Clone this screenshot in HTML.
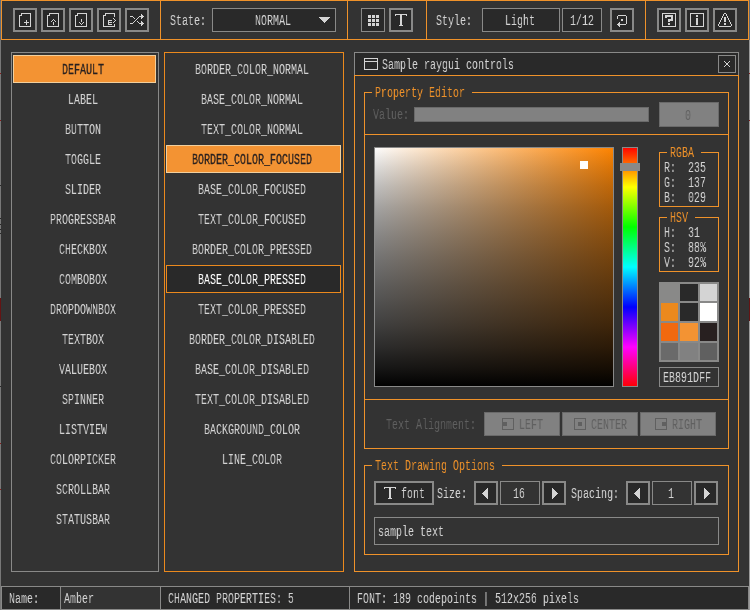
<!DOCTYPE html>
<html><head><meta charset="utf-8"><title>rGuiStyler</title>
<style>
html,body{margin:0;padding:0}
body{width:750px;height:610px;background:#333333;position:relative;overflow:hidden}
#app{position:absolute;left:0;top:0;width:750px;height:610px;overflow:hidden;background:#333333}
#app div,#app svg,#app span{position:absolute;display:block}
.tp{-webkit-text-stroke:0.3px}
.t{font:15.18px/16px "Liberation Mono",monospace;white-space:pre;transform:scaleX(0.6587);transform-origin:0 0;letter-spacing:0;will-change:transform}
</style></head><body><div id="app">
<div style="left:0px;top:0px;width:1px;height:40px;background:#5f6a78"></div>
<div style="left:0px;top:40px;width:1px;height:570px;background:#787878"></div>
<div style="left:0px;top:185px;width:1px;height:1px;background:#2a2a2a"></div>
<div style="left:0px;top:218px;width:1px;height:1px;background:#2a2a2a"></div>
<div style="left:0px;top:224px;width:1px;height:1px;background:#2a2a2a"></div>
<div style="left:0px;top:229px;width:1px;height:1px;background:#2a2a2a"></div>
<div style="left:0px;top:233px;width:1px;height:1px;background:#2a2a2a"></div>
<div style="left:0px;top:386px;width:1px;height:1px;background:#2a2a2a"></div>
<div style="left:0px;top:443px;width:1px;height:1px;background:#8b1a1a"></div>
<div style="left:0px;top:489px;width:1px;height:1px;background:#8b1a1a"></div>
<div style="left:0px;top:73px;width:1px;height:1px;background:#8b1a1a"></div>
<div style="left:0px;top:120px;width:1px;height:1px;background:#8b1a1a"></div>
<div style="left:749px;top:0px;width:1px;height:40px;background:#5f6a78"></div>
<div style="left:749px;top:40px;width:1px;height:570px;background:#9a9a9a"></div>
<div style="left:749px;top:73px;width:1px;height:1px;background:#8b1a1a"></div>
<div style="left:749px;top:120px;width:1px;height:1px;background:#8b1a1a"></div>
<div style="left:0px;top:298px;width:1px;height:23px;background:#641414"></div>
<div style="left:749px;top:298px;width:1px;height:23px;background:#641414"></div>
<div style="left:1px;top:0px;width:160px;height:40px;background:#333333;box-shadow:inset 0 0 0 1px #ef922a;"></div>
<div style="left:160px;top:0px;width:188px;height:40px;background:#333333;box-shadow:inset 0 0 0 1px #ef922a;"></div>
<div style="left:347px;top:0px;width:80px;height:40px;background:#333333;box-shadow:inset 0 0 0 1px #ef922a;"></div>
<div style="left:426px;top:0px;width:220px;height:40px;background:#333333;box-shadow:inset 0 0 0 1px #ef922a;"></div>
<div style="left:645px;top:0px;width:104px;height:40px;background:#333333;box-shadow:inset 0 0 0 1px #ef922a;"></div>
<div style="left:13px;top:8px;width:24px;height:24px;background:#292929;box-shadow:inset 0 0 0 2px #898988;"></div>
<div style="left:41px;top:8px;width:24px;height:24px;background:#292929;box-shadow:inset 0 0 0 2px #898988;"></div>
<div style="left:69px;top:8px;width:24px;height:24px;background:#292929;box-shadow:inset 0 0 0 2px #898988;"></div>
<div style="left:97px;top:8px;width:24px;height:24px;background:#292929;box-shadow:inset 0 0 0 2px #898988;"></div>
<div style="left:125px;top:8px;width:24px;height:24px;background:#292929;box-shadow:inset 0 0 0 2px #898988;"></div>
<span class="t" style="left:170.4px;top:13px;color:#d4d4d4">State:</span>
<div style="left:212px;top:8px;width:124px;height:24px;background:#292929;box-shadow:inset 0 0 0 1px #898988;"></div>
<span class="t" style="left:255.4px;top:13px;color:#d4d4d4">NORMAL</span>
<svg style="left:319px;top:17px" width="11" height="6" viewBox="0 0 11 6" shape-rendering="crispEdges"><path d="M0,0h11v1h-11zM1,1h9v1h-9zM2,2h7v1h-7zM3,3h5v1h-5zM4,4h3v1h-3zM5,5h1v1h-1z" fill="#d4d4d4"/></svg>
<div style="left:361px;top:8px;width:24px;height:24px;background:#292929;box-shadow:inset 0 0 0 1px #898988;"></div>
<div style="left:389px;top:8px;width:24px;height:24px;background:#292929;box-shadow:inset 0 0 0 2px #898988;"></div>
<span class="t" style="left:436.4px;top:13px;color:#d4d4d4">Style:</span>
<div style="left:482px;top:8px;width:78px;height:24px;background:#292929;box-shadow:inset 0 0 0 1px #898988;"></div>
<span class="t" style="left:505.4px;top:13px;color:#d4d4d4">Light</span>
<div style="left:562px;top:8px;width:40px;height:24px;background:#292929;box-shadow:inset 0 0 0 1px #898988;"></div>
<span class="t" style="left:570.4px;top:13px;color:#d4d4d4">1/12</span>
<div style="left:610px;top:8px;width:24px;height:24px;background:#292929;box-shadow:inset 0 0 0 2px #898988;"></div>
<div style="left:657px;top:8px;width:24px;height:24px;background:#292929;box-shadow:inset 0 0 0 2px #898988;"></div>
<div style="left:685px;top:8px;width:24px;height:24px;background:#292929;box-shadow:inset 0 0 0 2px #898988;"></div>
<div style="left:713px;top:8px;width:24px;height:24px;background:#292929;box-shadow:inset 0 0 0 2px #898988;"></div>
<div style="left:11px;top:52px;width:148px;height:520px;background:#333333;box-shadow:inset 0 0 0 1px #898988;"></div>
<div style="left:13px;top:55px;width:143px;height:28px;background:#f39333;box-shadow:inset 0 0 0 1px #f1cf9d;"></div>
<span class="t tp" style="left:62.4px;top:62px;color:#282020">DEFAULT</span>
<span class="t" style="left:68.4px;top:92px;color:#d4d4d4">LABEL</span>
<span class="t" style="left:65.4px;top:122px;color:#d4d4d4">BUTTON</span>
<span class="t" style="left:65.4px;top:152px;color:#d4d4d4">TOGGLE</span>
<span class="t" style="left:65.4px;top:182px;color:#d4d4d4">SLIDER</span>
<span class="t" style="left:50.4px;top:212px;color:#d4d4d4">PROGRESSBAR</span>
<span class="t" style="left:59.4px;top:242px;color:#d4d4d4">CHECKBOX</span>
<span class="t" style="left:59.4px;top:272px;color:#d4d4d4">COMBOBOX</span>
<span class="t" style="left:50.4px;top:302px;color:#d4d4d4">DROPDOWNBOX</span>
<span class="t" style="left:62.4px;top:332px;color:#d4d4d4">TEXTBOX</span>
<span class="t" style="left:59.4px;top:362px;color:#d4d4d4">VALUEBOX</span>
<span class="t" style="left:62.4px;top:392px;color:#d4d4d4">SPINNER</span>
<span class="t" style="left:59.4px;top:422px;color:#d4d4d4">LISTVIEW</span>
<span class="t" style="left:50.4px;top:452px;color:#d4d4d4">COLORPICKER</span>
<span class="t" style="left:56.4px;top:482px;color:#d4d4d4">SCROLLBAR</span>
<span class="t" style="left:56.4px;top:512px;color:#d4d4d4">STATUSBAR</span>
<div style="left:164px;top:52px;width:180px;height:520px;background:#333333;box-shadow:inset 0 0 0 1px #eb891d;"></div>
<span class="t" style="left:195.4px;top:62px;color:#d4d4d4">BORDER_COLOR_NORMAL</span>
<span class="t" style="left:201.4px;top:92px;color:#d4d4d4">BASE_COLOR_NORMAL</span>
<span class="t" style="left:201.4px;top:122px;color:#d4d4d4">TEXT_COLOR_NORMAL</span>
<div style="left:166px;top:145px;width:175px;height:28px;background:#f39333;box-shadow:inset 0 0 0 1px #f1cf9d;"></div>
<span class="t tp" style="left:192.4px;top:152px;color:#282020">BORDER_COLOR_FOCUSED</span>
<span class="t" style="left:198.4px;top:182px;color:#d4d4d4">BASE_COLOR_FOCUSED</span>
<span class="t" style="left:198.4px;top:212px;color:#d4d4d4">TEXT_COLOR_FOCUSED</span>
<span class="t" style="left:192.4px;top:242px;color:#d4d4d4">BORDER_COLOR_PRESSED</span>
<div style="left:166px;top:265px;width:175px;height:28px;background:#292929;box-shadow:inset 0 0 0 1px #eb891d;"></div>
<span class="t" style="left:198.4px;top:272px;color:#ffffff">BASE_COLOR_PRESSED</span>
<span class="t" style="left:198.4px;top:302px;color:#d4d4d4">TEXT_COLOR_PRESSED</span>
<span class="t" style="left:189.4px;top:332px;color:#d4d4d4">BORDER_COLOR_DISABLED</span>
<span class="t" style="left:195.4px;top:362px;color:#d4d4d4">BASE_COLOR_DISABLED</span>
<span class="t" style="left:195.4px;top:392px;color:#d4d4d4">TEXT_COLOR_DISABLED</span>
<span class="t" style="left:204.4px;top:422px;color:#d4d4d4">BACKGROUND_COLOR</span>
<span class="t" style="left:222.4px;top:452px;color:#d4d4d4">LINE_COLOR</span>
<div style="left:354px;top:52px;width:385px;height:24px;background:#292929;box-shadow:inset 0 0 0 1px #898988;"></div>
<div style="left:354px;top:75px;width:385px;height:497px;background:#333333;box-shadow:inset 0 0 0 1px #ef922a;"></div>
<div style="left:718px;top:55px;width:18px;height:18px;background:#292929;box-shadow:inset 0 0 0 1px #898988;"></div>
<svg style="left:724px;top:61px" width="6" height="6" viewBox="0 0 6 6" shape-rendering="crispEdges"><path d="M0,0h1v1h-1zM5,0h1v1h-1zM1,1h1v1h-1zM4,1h1v1h-1zM2,2h2v2h-2zM1,4h1v1h-1zM4,4h1v1h-1zM0,5h1v1h-1zM5,5h1v1h-1z" fill="#d4d4d4"/></svg>
<svg style="left:364px;top:58px" width="14" height="12" viewBox="0 0 14 12" shape-rendering="crispEdges"><path d="M0.5,0.5 H13.5 V11.5 H0.5 Z M0.5,3.5 H13.5" fill="none" stroke="#d4d4d4"/></svg>
<span class="t" style="left:382.4px;top:57px;color:#d4d4d4">Sample raygui controls</span>
<div style="left:364px;top:92px;width:1px;height:357px;background:#ef922a"></div>
<div style="left:364px;top:448px;width:365px;height:1px;background:#ef922a"></div>
<div style="left:728px;top:92px;width:1px;height:357px;background:#ef922a"></div>
<div style="left:364px;top:92px;width:8px;height:1px;background:#ef922a"></div>
<div style="left:472px;top:92px;width:257px;height:1px;background:#ef922a"></div>
<span class="t" style="left:375.4px;top:85px;color:#ef922a">Property Editor</span>
<div style="left:364px;top:134px;width:365px;height:1px;background:#ef922a"></div>
<div style="left:364px;top:399px;width:365px;height:1px;background:#ef922a"></div>
<span class="t" style="left:373.4px;top:107px;color:#606060">Value:</span>
<div style="left:414px;top:107px;width:235px;height:15px;background:#818181;box-shadow:inset 0 0 0 1px #6a6a6a;"></div>
<div style="left:659px;top:102px;width:60px;height:25px;background:#818181;box-shadow:inset 0 0 0 1px #6a6a6a;"></div>
<span class="t" style="left:685.4px;top:108px;color:#606060">0</span>
<div style="left:374px;top:147px;width:240px;height:240px;background:linear-gradient(to bottom,rgba(0,0,0,0.0000) 0.00%,rgba(25,25,25,0.0799) 4.17%,rgba(25,25,25,0.1534) 8.33%,rgba(25,25,25,0.2207) 12.50%,rgba(25,25,25,0.2824) 16.67%,rgba(25,25,25,0.3389) 20.83%,rgba(24,24,24,0.3906) 25.00%,rgba(24,24,24,0.4380) 29.17%,rgba(24,24,24,0.4815) 33.33%,rgba(23,23,23,0.5215) 37.50%,rgba(22,22,22,0.5584) 41.67%,rgba(21,21,21,0.5928) 45.83%,rgba(20,20,20,0.6250) 50.00%,rgba(19,19,19,0.6555) 54.17%,rgba(18,18,18,0.6846) 58.33%,rgba(17,17,17,0.7129) 62.50%,rgba(15,15,15,0.7407) 66.67%,rgba(14,14,14,0.7686) 70.83%,rgba(12,12,12,0.7969) 75.00%,rgba(10,10,10,0.8260) 79.17%,rgba(8,8,8,0.8565) 83.33%,rgba(6,6,6,0.8887) 87.50%,rgba(4,4,4,0.9230) 91.67%,rgba(2,2,2,0.9600) 95.83%,rgba(0,0,0,1.0000) 100.00%),linear-gradient(to right,#fff,#ff8400);box-shadow:inset 0 0 0 1px #898988"></div>
<div style="left:580px;top:161px;width:8px;height:8px;background:#ffffff"></div>
<div style="left:622px;top:147px;width:16px;height:240px;background:linear-gradient(to bottom,#f00 0%,#ff0 16.667%,#0f0 33.333%,#0ff 50%,#00f 66.667%,#f0f 83.333%,#f00 100%);box-shadow:inset 0 0 0 1px #898988"></div>
<div style="left:620px;top:163px;width:20px;height:8px;background:#898988"></div>
<div style="left:659px;top:152px;width:1px;height:55px;background:#ef922a"></div>
<div style="left:659px;top:206px;width:60px;height:1px;background:#ef922a"></div>
<div style="left:718px;top:152px;width:1px;height:55px;background:#ef922a"></div>
<div style="left:659px;top:152px;width:8px;height:1px;background:#ef922a"></div>
<div style="left:701px;top:152px;width:18px;height:1px;background:#ef922a"></div>
<span class="t" style="left:670.4px;top:145px;color:#ef922a">RGBA</span>
<span class="t" style="left:664.4px;top:160px;color:#d4d4d4">R:</span>
<span class="t" style="left:688.4px;top:160px;color:#d4d4d4">235</span>
<span class="t" style="left:664.4px;top:175px;color:#d4d4d4">G:</span>
<span class="t" style="left:688.4px;top:175px;color:#d4d4d4">137</span>
<span class="t" style="left:664.4px;top:190px;color:#d4d4d4">B:</span>
<span class="t" style="left:688.4px;top:190px;color:#d4d4d4">029</span>
<div style="left:659px;top:217px;width:1px;height:55px;background:#ef922a"></div>
<div style="left:659px;top:271px;width:60px;height:1px;background:#ef922a"></div>
<div style="left:718px;top:217px;width:1px;height:55px;background:#ef922a"></div>
<div style="left:659px;top:217px;width:8px;height:1px;background:#ef922a"></div>
<div style="left:695px;top:217px;width:24px;height:1px;background:#ef922a"></div>
<span class="t" style="left:670.4px;top:210px;color:#ef922a">HSV</span>
<span class="t" style="left:664.4px;top:225px;color:#d4d4d4">H:</span>
<span class="t" style="left:688.4px;top:225px;color:#d4d4d4">31</span>
<span class="t" style="left:664.4px;top:240px;color:#d4d4d4">S:</span>
<span class="t" style="left:688.4px;top:240px;color:#d4d4d4">88%</span>
<span class="t" style="left:664.4px;top:255px;color:#d4d4d4">V:</span>
<span class="t" style="left:688.4px;top:255px;color:#d4d4d4">92%</span>
<div style="left:659px;top:282px;width:60px;height:80px;background:#898988"></div>
<div style="left:661px;top:284px;width:17px;height:17px;background:#898988"></div>
<div style="left:680px;top:284px;width:18px;height:17px;background:#292929"></div>
<div style="left:700px;top:284px;width:17px;height:17px;background:#d4d4d4"></div>
<div style="left:661px;top:303px;width:17px;height:18px;background:#eb891d"></div>
<div style="left:680px;top:303px;width:18px;height:18px;background:#292929"></div>
<div style="left:700px;top:303px;width:17px;height:18px;background:#ffffff"></div>
<div style="left:661px;top:323px;width:17px;height:18px;background:#f1690f"></div>
<div style="left:680px;top:323px;width:18px;height:18px;background:#f39333"></div>
<div style="left:700px;top:323px;width:17px;height:18px;background:#282020"></div>
<div style="left:661px;top:343px;width:17px;height:17px;background:#6a6a6a"></div>
<div style="left:680px;top:343px;width:18px;height:17px;background:#818181"></div>
<div style="left:700px;top:343px;width:17px;height:17px;background:#606060"></div>
<div style="left:659px;top:367px;width:60px;height:20px;background:#333333;box-shadow:inset 0 0 0 1px #898988;"></div>
<span class="t" style="left:663.4px;top:370px;color:#d4d4d4">EB891DFF</span>
<span class="t" style="left:386.4px;top:417px;color:#606060">Text Alignment:</span>
<div style="left:484px;top:412px;width:76px;height:24px;background:#818181;box-shadow:inset 0 0 0 1px #6a6a6a;"></div>
<svg style="left:500px;top:416px" width="16" height="16" viewBox="0 0 16 16" shape-rendering="crispEdges"><path d="M2.5,2.5 H13.5 V13.5 H2.5 Z" fill="none" stroke="#606060"/><rect x="3" y="6" width="4" height="4" fill="#606060"/></svg>
<span class="t" style="left:519.4px;top:417px;color:#606060">LEFT</span>
<div style="left:562px;top:412px;width:76px;height:24px;background:#818181;box-shadow:inset 0 0 0 1px #6a6a6a;"></div>
<svg style="left:572px;top:416px" width="16" height="16" viewBox="0 0 16 16" shape-rendering="crispEdges"><path d="M2.5,2.5 H13.5 V13.5 H2.5 Z" fill="none" stroke="#606060"/><rect x="6" y="6" width="4" height="4" fill="#606060"/></svg>
<span class="t" style="left:591.4px;top:417px;color:#606060">CENTER</span>
<div style="left:640px;top:412px;width:76px;height:24px;background:#818181;box-shadow:inset 0 0 0 1px #6a6a6a;"></div>
<svg style="left:653px;top:416px" width="16" height="16" viewBox="0 0 16 16" shape-rendering="crispEdges"><path d="M2.5,2.5 H13.5 V13.5 H2.5 Z" fill="none" stroke="#606060"/><rect x="9" y="6" width="4" height="4" fill="#606060"/></svg>
<span class="t" style="left:672.4px;top:417px;color:#606060">RIGHT</span>
<div style="left:364px;top:465px;width:1px;height:90px;background:#ef922a"></div>
<div style="left:364px;top:554px;width:365px;height:1px;background:#ef922a"></div>
<div style="left:728px;top:465px;width:1px;height:90px;background:#ef922a"></div>
<div style="left:364px;top:465px;width:8px;height:1px;background:#ef922a"></div>
<div style="left:502px;top:465px;width:227px;height:1px;background:#ef922a"></div>
<span class="t" style="left:375.4px;top:458px;color:#ef922a">Text Drawing Options</span>
<div style="left:374px;top:481px;width:60px;height:24px;background:#292929;box-shadow:inset 0 0 0 2px #898988;"></div>
<span class="t" style="left:401.4px;top:486px;color:#d4d4d4">font</span>
<span class="t" style="left:437.4px;top:486px;color:#d4d4d4">Size:</span>
<div style="left:474px;top:481px;width:24px;height:24px;background:#292929;box-shadow:inset 0 0 0 2px #898988;"></div>
<div style="left:500px;top:481px;width:40px;height:24px;background:#333333;box-shadow:inset 0 0 0 1px #898988;"></div>
<div style="left:542px;top:481px;width:24px;height:24px;background:#292929;box-shadow:inset 0 0 0 2px #898988;"></div>
<span class="t" style="left:513.4px;top:486px;color:#d4d4d4">16</span>
<span class="t" style="left:571.4px;top:486px;color:#d4d4d4">Spacing:</span>
<div style="left:626px;top:481px;width:24px;height:24px;background:#292929;box-shadow:inset 0 0 0 2px #898988;"></div>
<div style="left:652px;top:481px;width:40px;height:24px;background:#333333;box-shadow:inset 0 0 0 1px #898988;"></div>
<div style="left:694px;top:481px;width:24px;height:24px;background:#292929;box-shadow:inset 0 0 0 2px #898988;"></div>
<span class="t" style="left:668.4px;top:486px;color:#d4d4d4">1</span>
<svg style="left:482px;top:488px" width="6" height="11" viewBox="0 0 6 11" shape-rendering="crispEdges"><path d="M5,0h1v11h-1zM4,1h1v9h-1zM3,2h1v7h-1zM2,3h1v5h-1zM1,4h1v3h-1zM0,5h1v1h-1z" fill="#d4d4d4"/></svg>
<svg style="left:634px;top:488px" width="6" height="11" viewBox="0 0 6 11" shape-rendering="crispEdges"><path d="M5,0h1v11h-1zM4,1h1v9h-1zM3,2h1v7h-1zM2,3h1v5h-1zM1,4h1v3h-1zM0,5h1v1h-1z" fill="#d4d4d4"/></svg>
<svg style="left:552px;top:488px" width="6" height="11" viewBox="0 0 6 11" shape-rendering="crispEdges"><path d="M0,0h1v11h-1zM1,1h1v9h-1zM2,2h1v7h-1zM3,3h1v5h-1zM4,4h1v3h-1zM5,5h1v1h-1z" fill="#d4d4d4"/></svg>
<svg style="left:704px;top:488px" width="6" height="11" viewBox="0 0 6 11" shape-rendering="crispEdges"><path d="M0,0h1v11h-1zM1,1h1v9h-1zM2,2h1v7h-1zM3,3h1v5h-1zM4,4h1v3h-1zM5,5h1v1h-1z" fill="#d4d4d4"/></svg>
<div style="left:374px;top:517px;width:345px;height:28px;background:#333333;box-shadow:inset 0 0 0 1px #898988;"></div>
<span class="t" style="left:378.4px;top:524px;color:#d4d4d4">sample text</span>
<div style="left:1px;top:586px;width:60px;height:24px;background:#292929;box-shadow:inset 0 0 0 1px #898988;"></div>
<span class="t" style="left:9.4px;top:591px;color:#d4d4d4">Name:</span>
<div style="left:60px;top:586px;width:101px;height:24px;background:#333333;box-shadow:inset 0 0 0 1px #898988;"></div>
<span class="t" style="left:64.4px;top:591px;color:#d4d4d4">Amber</span>
<div style="left:160px;top:586px;width:190px;height:24px;background:#292929;box-shadow:inset 0 0 0 1px #898988;"></div>
<span class="t" style="left:168.4px;top:591px;color:#d4d4d4">CHANGED PROPERTIES: 5</span>
<div style="left:349px;top:586px;width:400px;height:24px;background:#292929;box-shadow:inset 0 0 0 1px #898988;"></div>
<span class="t" style="left:357.4px;top:591px;color:#d4d4d4">FONT: 189 codepoints | 512x256 pixels</span>
<svg style="left:17px;top:12px" width="16" height="16" viewBox="0 0 16 16" shape-rendering="crispEdges"><path d="M4,1h10v1h-10zM4,2h1v1h-1zM13,2h1v1h-1zM2,3h3v1h-3zM13,3h1v1h-1zM2,4h1v1h-1zM13,4h1v1h-1zM2,5h1v1h-1zM13,5h1v1h-1zM2,6h1v1h-1zM13,6h1v1h-1zM2,7h1v1h-1zM13,7h1v1h-1zM2,8h1v1h-1zM9,8h1v1h-1zM13,8h1v1h-1zM2,9h1v1h-1zM9,9h1v1h-1zM13,9h1v1h-1zM2,10h1v1h-1zM7,10h5v1h-5zM13,10h1v1h-1zM2,11h1v1h-1zM9,11h1v1h-1zM13,11h1v1h-1zM2,12h1v1h-1zM9,12h1v1h-1zM13,12h1v1h-1zM2,13h1v1h-1zM13,13h1v1h-1zM2,14h12v1h-12z" fill="#d4d4d4"/></svg>
<svg style="left:45px;top:12px" width="16" height="16" viewBox="0 0 16 16" shape-rendering="crispEdges"><path d="M4,1h10v1h-10zM4,2h1v1h-1zM13,2h1v1h-1zM2,3h3v1h-3zM13,3h1v1h-1zM2,4h1v1h-1zM13,4h1v1h-1zM2,5h1v1h-1zM13,5h1v1h-1zM2,6h1v1h-1zM13,6h1v1h-1zM2,7h1v1h-1zM8,7h1v1h-1zM13,7h1v1h-1zM2,8h1v1h-1zM7,8h1v1h-1zM9,8h1v1h-1zM13,8h1v1h-1zM2,9h1v1h-1zM6,9h1v1h-1zM10,9h1v1h-1zM13,9h1v1h-1zM2,10h1v1h-1zM8,10h1v1h-1zM13,10h1v1h-1zM2,11h1v1h-1zM8,11h1v1h-1zM13,11h1v1h-1zM2,12h1v1h-1zM8,12h1v1h-1zM13,12h1v1h-1zM2,13h1v1h-1zM13,13h1v1h-1zM2,14h12v1h-12z" fill="#d4d4d4"/></svg>
<svg style="left:73px;top:12px" width="16" height="16" viewBox="0 0 16 16" shape-rendering="crispEdges"><path d="M4,1h10v1h-10zM4,2h1v1h-1zM13,2h1v1h-1zM2,3h3v1h-3zM13,3h1v1h-1zM2,4h1v1h-1zM13,4h1v1h-1zM2,5h1v1h-1zM13,5h1v1h-1zM2,6h1v1h-1zM13,6h1v1h-1zM2,7h1v1h-1zM8,7h1v1h-1zM13,7h1v1h-1zM2,8h1v1h-1zM8,8h1v1h-1zM13,8h1v1h-1zM2,9h1v1h-1zM8,9h1v1h-1zM13,9h1v1h-1zM2,10h1v1h-1zM6,10h1v1h-1zM10,10h1v1h-1zM13,10h1v1h-1zM2,11h1v1h-1zM7,11h1v1h-1zM9,11h1v1h-1zM13,11h1v1h-1zM2,12h1v1h-1zM8,12h1v1h-1zM13,12h1v1h-1zM2,13h1v1h-1zM13,13h1v1h-1zM2,14h12v1h-12z" fill="#d4d4d4"/></svg>
<svg style="left:101px;top:12px" width="16" height="16" viewBox="0 0 16 16" shape-rendering="crispEdges"><path d="M4,1h10v1h-10zM4,2h1v1h-1zM13,2h1v1h-1zM2,3h3v1h-3zM13,3h1v1h-1zM2,4h1v1h-1zM13,4h1v1h-1zM2,5h1v1h-1zM2,6h1v1h-1zM12,6h1v1h-1zM2,7h1v1h-1zM13,7h1v1h-1zM2,8h1v1h-1zM7,8h4v1h-4zM14,8h1v1h-1zM2,9h1v1h-1zM7,9h1v1h-1zM13,9h1v1h-1zM2,10h1v1h-1zM7,10h4v1h-4zM12,10h1v1h-1zM2,11h1v1h-1zM7,11h1v1h-1zM2,12h1v1h-1zM7,12h4v1h-4zM13,12h1v1h-1zM2,13h1v1h-1zM13,13h1v1h-1zM2,14h12v1h-12z" fill="#d4d4d4"/></svg>
<svg style="left:129px;top:12px" width="16" height="16" viewBox="0 0 16 16" shape-rendering="crispEdges"><path d="M12,2h1v1h-1zM12,3h2v1h-2zM1,4h3v1h-3zM10,4h5v1h-5zM4,5h1v1h-1zM9,5h1v1h-1zM12,5h2v1h-2zM5,6h1v1h-1zM8,6h1v1h-1zM12,6h1v1h-1zM7,7h1v1h-1zM6,8h1v1h-1zM5,9h1v1h-1zM8,9h1v1h-1zM12,9h1v1h-1zM4,10h1v1h-1zM9,10h1v1h-1zM12,10h2v1h-2zM1,11h3v1h-3zM10,11h5v1h-5zM12,12h2v1h-2zM12,13h1v1h-1z" fill="#d4d4d4"/></svg>
<svg style="left:365px;top:12px" width="16" height="16" viewBox="0 0 16 16" shape-rendering="crispEdges"><path d="M3,3h3v1h-3zM7,3h3v1h-3zM11,3h3v1h-3zM3,4h3v1h-3zM7,4h3v1h-3zM11,4h3v1h-3zM3,5h3v1h-3zM7,5h3v1h-3zM11,5h3v1h-3zM3,7h3v1h-3zM7,7h3v1h-3zM11,7h3v1h-3zM3,8h3v1h-3zM7,8h3v1h-3zM11,8h3v1h-3zM3,9h3v1h-3zM7,9h3v1h-3zM11,9h3v1h-3zM3,11h3v1h-3zM7,11h3v1h-3zM11,11h3v1h-3zM3,12h3v1h-3zM7,12h3v1h-3zM11,12h3v1h-3zM3,13h3v1h-3zM7,13h3v1h-3zM11,13h3v1h-3z" fill="#d4d4d4"/></svg>
<svg style="left:393px;top:12px" width="16" height="16" viewBox="0 0 16 16" shape-rendering="crispEdges"><path d="M2,2h12v1h-12zM2,3h1v1h-1zM7,3h2v1h-2zM13,3h1v1h-1zM7,4h2v1h-2zM7,5h2v1h-2zM7,6h2v1h-2zM7,7h2v1h-2zM7,8h2v1h-2zM7,9h2v1h-2zM7,10h2v1h-2zM7,11h2v1h-2zM7,12h2v1h-2zM6,13h4v1h-4z" fill="#d4d4d4"/></svg>
<svg style="left:614px;top:12px" width="16" height="16" viewBox="0 0 16 16" shape-rendering="crispEdges"><path d="M4,3h8v1h-8zM3,4h1v1h-1zM12,4h1v1h-1zM3,5h1v1h-1zM12,5h1v1h-1zM3,6h1v1h-1zM12,6h1v1h-1zM7,7h2v1h-2zM12,7h1v1h-1zM7,8h2v1h-2zM12,8h1v1h-1zM12,9h1v1h-1zM5,10h1v1h-1zM12,10h1v1h-1zM4,11h2v1h-2zM12,11h1v1h-1zM3,12h9v1h-9zM4,13h2v1h-2zM5,14h1v1h-1z" fill="#d4d4d4"/></svg>
<svg style="left:661px;top:12px" width="16" height="16" viewBox="0 0 16 16" shape-rendering="crispEdges"><path d="M1,1h14v1h-14zM1,2h1v1h-1zM14,2h1v1h-1zM1,3h1v1h-1zM4,3h8v1h-8zM14,3h1v1h-1zM1,4h1v1h-1zM4,4h8v1h-8zM14,4h1v1h-1zM1,5h1v1h-1zM4,5h2v1h-2zM10,5h2v1h-2zM14,5h1v1h-1zM1,6h1v1h-1zM10,6h2v1h-2zM14,6h1v1h-1zM1,7h1v1h-1zM7,7h5v1h-5zM14,7h1v1h-1zM1,8h1v1h-1zM7,8h5v1h-5zM14,8h1v1h-1zM1,9h1v1h-1zM7,9h2v1h-2zM14,9h1v1h-1zM1,10h1v1h-1zM14,10h1v1h-1zM1,11h1v1h-1zM7,11h2v1h-2zM14,11h1v1h-1zM1,12h1v1h-1zM7,12h2v1h-2zM14,12h1v1h-1zM1,13h1v1h-1zM14,13h1v1h-1zM1,14h14v1h-14z" fill="#d4d4d4"/></svg>
<svg style="left:689px;top:12px" width="16" height="16" viewBox="0 0 16 16" shape-rendering="crispEdges"><path d="M1,1h14v1h-14zM1,2h1v1h-1zM14,2h1v1h-1zM1,3h1v1h-1zM7,3h2v1h-2zM14,3h1v1h-1zM1,4h1v1h-1zM7,4h2v1h-2zM14,4h1v1h-1zM1,5h1v1h-1zM14,5h1v1h-1zM1,6h1v1h-1zM7,6h2v1h-2zM14,6h1v1h-1zM1,7h1v1h-1zM7,7h2v1h-2zM14,7h1v1h-1zM1,8h1v1h-1zM7,8h2v1h-2zM14,8h1v1h-1zM1,9h1v1h-1zM7,9h2v1h-2zM14,9h1v1h-1zM1,10h1v1h-1zM7,10h2v1h-2zM14,10h1v1h-1zM1,11h1v1h-1zM7,11h2v1h-2zM14,11h1v1h-1zM1,12h1v1h-1zM7,12h2v1h-2zM14,12h1v1h-1zM1,13h1v1h-1zM14,13h1v1h-1zM1,14h14v1h-14z" fill="#d4d4d4"/></svg>
<svg style="left:717px;top:12px" width="16" height="16" viewBox="0 0 16 16" shape-rendering="crispEdges"><path d="M7,1h2v1h-2zM6,2h1v1h-1zM9,2h1v1h-1zM6,3h1v1h-1zM9,3h1v1h-1zM5,4h1v1h-1zM10,4h1v1h-1zM5,5h1v1h-1zM7,5h2v1h-2zM10,5h1v1h-1zM4,6h1v1h-1zM7,6h2v1h-2zM11,6h1v1h-1zM4,7h1v1h-1zM7,7h2v1h-2zM11,7h1v1h-1zM3,8h1v1h-1zM7,8h2v1h-2zM12,8h1v1h-1zM3,9h1v1h-1zM7,9h2v1h-2zM12,9h1v1h-1zM2,10h1v1h-1zM13,10h1v1h-1zM2,11h1v1h-1zM7,11h2v1h-2zM13,11h1v1h-1zM1,12h1v1h-1zM7,12h2v1h-2zM14,12h1v1h-1zM1,13h1v1h-1zM14,13h1v1h-1zM2,14h12v1h-12z" fill="#d4d4d4"/></svg>
<svg style="left:382px;top:485px" width="16" height="16" viewBox="0 0 16 16" shape-rendering="crispEdges"><path d="M2,2h12v1h-12zM2,3h1v1h-1zM7,3h2v1h-2zM13,3h1v1h-1zM7,4h2v1h-2zM7,5h2v1h-2zM7,6h2v1h-2zM7,7h2v1h-2zM7,8h2v1h-2zM7,9h2v1h-2zM7,10h2v1h-2zM7,11h2v1h-2zM7,12h2v1h-2zM6,13h4v1h-4z" fill="#d4d4d4"/></svg>
</div></body></html>
